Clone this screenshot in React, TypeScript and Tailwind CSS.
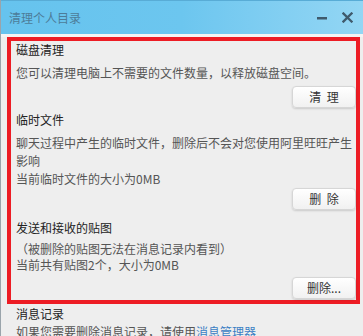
import React from "react";

const font = { fontFamily: '"Noto Sans CJK SC", "Noto Sans", sans-serif' };

function Btn({ children }: { children: React.ReactNode }) {
  return (
    <div className="flex justify-end">
      <button className="w-[64px] h-[22px] rounded-[4px] border border-[#d6d6d6] bg-gradient-to-b from-[#ffffff] to-[#f1f1f1] shadow-[0_1px_2px_rgba(0,0,0,0.15)] text-[12px] leading-[20px] text-[#333333] flex items-center justify-center">
        {children}
      </button>
    </div>
  );
}

export default function App() {
  return (
    <div
      style={font}
      className="w-[363px] h-[336px] overflow-hidden bg-[#eeeeee] border-l border-[#9aa4ab] flex flex-col"
    >
      <div className="h-[34px] shrink-0 bg-gradient-to-r from-[#66c3ee] via-[#6cc6ef] to-[#93d6f4] border-t border-[#58acd6] flex items-center pl-[8px] pr-[10px]">
        <span className="text-[12px] text-[#4d7c99] leading-[16px]">清理个人目录</span>
        <div className="ml-auto flex items-center gap-[14px]">
          <svg width="11" height="11" viewBox="0 0 11 11">
            <rect x="0" y="5" width="10" height="2.5" fill="#3f5a6c" />
          </svg>
          <svg width="11" height="11" viewBox="0 0 11 11">
            <path d="M1.5 1.5 L9.5 9.5 M9.5 1.5 L1.5 9.5" stroke="#3f5a6c" strokeWidth="2.3" strokeLinecap="square" />
          </svg>
        </div>
      </div>
      <div className="h-[3px] shrink-0 bg-[#f4f4f4]" />
      <div className="ml-[6px] w-[353px] border-4 border-[#ed1c24] pl-[5px] pr-0 pb-[1px]">
        <div className="text-[12px] leading-[18px] text-[#222222]">磁盘清理</div>
        <div className="mt-[5px] text-[12px] leading-[18px] text-[#555555]">
          您可以清理电脑上不需要的文件数量，以释放磁盘空间。
        </div>
        <div className="mt-[4px]">
          <Btn>清&nbsp;&nbsp;理</Btn>
        </div>
        <div className="mt-[3px] text-[12px] leading-[18px] text-[#222222]">临时文件</div>
        <div className="mt-[5px] text-[12px] leading-[18px] text-[#555555] whitespace-nowrap">
          聊天过程中产生的临时文件，删除后不会对您使用阿里旺旺产生
          <br />
          影响
          <br />
          当前临时文件的大小为0MB
        </div>
        <div>
          <Btn>删&nbsp;&nbsp;除</Btn>
        </div>
        <div className="mt-[9px] text-[12px] leading-[18px] text-[#222222]">发送和接收的贴图</div>
        <div className="mt-[4px] text-[12px] leading-[16px] text-[#555555]">
          （被删除的贴图无法在消息记录内看到）
          <br />
          当前共有贴图2个，大小为0MB
        </div>
        <div className="mt-[4px]">
          <Btn>删除...</Btn>
        </div>
      </div>
      <div className="pl-[15px] mt-[1px]">
        <div className="text-[12px] leading-[18px] text-[#222222]">消息记录</div>
        <div className="text-[12px] leading-[18px] text-[#555555] whitespace-nowrap">
          如果您需要删除消息记录，请使用<span className="text-[#3b7fc4]">消息管理器</span>
        </div>
      </div>
    </div>
  );
}
